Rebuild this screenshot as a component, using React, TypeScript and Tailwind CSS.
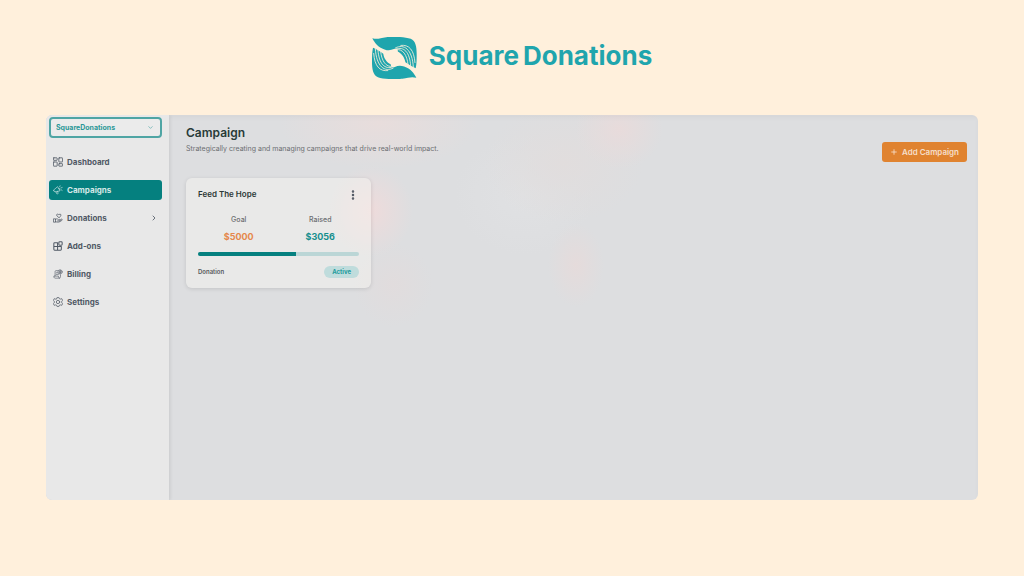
import React from "react";
import { ChevronDown, ChevronRight, EllipsisVertical, Plus } from "lucide-react";

const strokeProps = {
  viewBox: "0 0 24 24",
  fill: "none",
  stroke: "currentColor",
  strokeWidth: 1.8,
  strokeLinecap: "round" as const,
  strokeLinejoin: "round" as const,
  className: "size-[10px] shrink-0",
  "aria-hidden": true,
};

const DashboardIcon = () => (
  <svg {...strokeProps} strokeWidth={2}>
    <rect x="1" y="2" width="9" height="6" rx="1" />
    <rect x="1" y="12" width="9" height="10" rx="1" />
    <rect x="14" y="2" width="9" height="10" rx="1" />
    <rect x="14" y="16" width="9" height="6" rx="1" />
  </svg>
);

const CampaignsIcon = () => (
  <svg {...strokeProps} strokeWidth={1.5}>
    <path d="M2 14c-1-2 0-3 2-4l7-6 6 10-9 2c-3 1-5 0-6-2Z" />
    <path d="m7 16 2 5c2 1 4 0 3-2l-1-4M16 4l1-2M19 7l3-1M19 11l3 2M14 8c2-1 4 2 2 3" />
  </svg>
);

const DonationsIcon = () => (
  <svg {...strokeProps}>
    <path d="M14 11 9.500 7C7 4 10 1 14 4c4-3 7 0 4.500 3Z" />
    <path d="M2 14h4v8H2zM6 15c3-2 5-1 7 1h3c2 0 2 3 0 3h-5M17 17l3-2c2-1 3 1 1 3-5 4-9 5-15 3" />
  </svg>
);

const AddonsIcon = () => (
  <svg {...strokeProps} strokeWidth={2.5}>
    <path d="M11 4H4a2 2 0 0 0-2 2v14a2 2 0 0 0 2 2h14a2 2 0 0 0 2-2v-7M2 13h18M11 4v18" />
    <rect x="14" y="2" width="8" height="8" rx="2" />
  </svg>
);

const BillingIcon = () => (
  <svg {...strokeProps} strokeWidth={1.5}>
    <path d="M12 4H7C5 4 5 6 5 8v9H2c0 3 1 5 3 5h10c2 0 3-2 3-4v-4M5 17h8c0 3 1 5 3 5M8 9h3M8 13h5" />
    <circle cx="17" cy="7" r="5" />
    <path d="M19 5c-2-1-4 0-3 1.500l2 1c1 1.500-1 2.500-3 1.500M17 3v8" />
  </svg>
);

const SettingsIcon = () => (
  <svg {...strokeProps}>
    <path d="m9 4 1-3h4l1 3 3 1 3-1 2 4-2 2v4l2 2-2 4-3-1-3 1-1 3h-4l-1-3-3-1-3 1-2-4 2-2v-4L1 8l2-4 3 1Z" />
    <circle cx="12" cy="12" r="4" />
  </svg>
);

const LogoHand = () => (
  <>
    <path
      fill="#1fa5ad"
      d="M13 17C28 21 36 17 55 14C82 12 112 13 129 19C144 25 147 44 147 64C147 82 147 94 144 108C135 104 124 98 113 90C111 77 104 65 90 57C91 50 85 48 78 50C69 54 60 55 50 51C30 45 20 30 13 17Z"
    />
    <g fill="none" stroke="#fff0dc" strokeWidth="2.5">
      <path d="M82 47C108 33 134 50 137 106" />
      <path d="M84 50C108 42 126 58 129 102" />
      <path d="M84 52C105 48 118 68 121 98" />
      <path d="M98 39C124 36 139 52 142 92" />
    </g>
  </>
);

const Logo = () => (
  <svg viewBox="12 14 136 126" className="h-[42px] w-[45px]" aria-hidden="true">
    <LogoHand />
    <g transform="rotate(180 79.500 77)">
      <LogoHand />
    </g>
  </svg>
);

const navItems = [
  { name: "Dashboard", icon: DashboardIcon },
  { name: "Campaigns", icon: CampaignsIcon, active: true },
  { name: "Donations", icon: DonationsIcon, expandable: true },
  { name: "Add-ons", icon: AddonsIcon },
  { name: "Billing", icon: BillingIcon },
  { name: "Settings", icon: SettingsIcon },
];

const campaigns = [
  { id: 1, name: "Feed The Hope", goal: 5000, raised: 3056, type: "Donation", status: "Active" },
];

const Sidebar = () => (
  <aside className="w-[123px] shrink-0 bg-[#e8e8e8] px-[3px] pt-[2px] shadow-[1px_0_4px_rgba(0,0,0,0.08)]">
    <div className="relative">
      <select
        aria-label="Organization"
        className="block h-[21px] w-[113px] appearance-none rounded-[4px] border-2 border-[#4fa5a4] bg-[#ebebeb] px-[5px] pt-px text-[7px] font-bold text-[#2b9897]"
      >
        <option>SquareDonations</option>
      </select>
      <ChevronDown className="pointer-events-none absolute top-[7px] right-[12px] size-[7px] text-[#43a09f]" />
    </div>

    <nav className="mt-[14px] flex w-[113px] flex-col gap-2">
      {navItems.map((item) => (
        <a
          key={item.name}
          href="#"
          aria-current={item.active ? "page" : undefined}
          className={
            item.active
              ? "flex h-[20px] items-center gap-1 rounded-[3px] bg-[#05807f] px-1 text-[8px] font-bold text-[#d5e9e8]"
              : "flex h-[20px] items-center gap-1 rounded-[3px] px-1 text-[8px] font-bold text-[#505965]"
          }
        >
          <item.icon />
          <span>{item.name}</span>
          {item.expandable && <ChevronRight className="ml-auto size-2" strokeWidth={2.5} />}
        </a>
      ))}
    </nav>
  </aside>
);

const App = () => {
  return (
    <div className="min-h-screen bg-[#fff0dc] px-[46px] pb-[76px] font-['Inter',sans-serif]">
      <header className="flex h-[115px] items-center justify-center gap-[12px]">
        <Logo />
        <h1 className="flex gap-1 pb-1 text-[26px] leading-[30px] font-bold text-[#1fa5ad]">
          <span>Square</span>
          <span>Donations</span>
        </h1>
      </header>

      <div className="flex min-h-[385px] overflow-hidden rounded-[6px] bg-[#dddee0]">
        <Sidebar />

        {/* Main content */}
        <main className="flex-1 bg-[radial-gradient(ellipse_42px_46px_at_202px_96px,#eedbdb,transparent),radial-gradient(ellipse_44px_40px_at_450px_14px,#e8dbdb,transparent),radial-gradient(ellipse_28px_42px_at_407px_150px,#e5dbdb,transparent),radial-gradient(ellipse_100px_46px_at_210px_8px,#e8dddc,transparent),radial-gradient(ellipse_40px_42px_at_224px_170px,#e1dcdd,transparent),radial-gradient(ellipse_80px_60px_at_395px_48px,#e1dddd,transparent),radial-gradient(ellipse_70px_60px_at_355px_80px,#e0e1e3,transparent)] pr-[11px] pl-[17px] pt-[9px] shadow-[inset_0_3px_4px_rgba(0,0,0,0.03)]">
          <div className="flex items-start justify-between">
            <div>
              <h2 className="text-[12px] leading-[17px] font-semibold text-[#283b38]">Campaign</h2>
              <p className="mt-[3px] text-[7px] leading-[10px] text-[#6c6e72]">
                Strategically creating and managing campaigns that drive real-world impact.
              </p>
            </div>
            <button className="mt-[18px] flex h-[20px] items-center gap-1 rounded-[3px] bg-[#e08330] px-2 text-[8px] font-semibold text-[#f6dfcb]">
              <Plus className="size-2" strokeWidth={2.5} />
              Add Campaign
            </button>
          </div>

          {/* Campaign cards */}
          <div className="mt-4 grid grid-cols-[repeat(auto-fill,185px)] gap-4">
            {campaigns.map((campaign) => (
              <article
                key={campaign.id}
                className="rounded-[6px] bg-[#f8f6f2]/45 px-3 pt-[10px] pb-[10px] shadow-[0_1px_4px_rgba(0,0,0,0.12)]"
              >
                <div className="flex items-start justify-between">
                  <h3 className="text-[8px] leading-[12px] font-semibold text-[#2c3836]">{campaign.name}</h3>
                  <button aria-label="Campaign options" className="pt-px text-[#4e5560]">
                    <EllipsisVertical className="size-3" strokeWidth={3} />
                  </button>
                </div>
                <div className="mt-[13px] grid grid-cols-2 gap-1 pl-[2px] text-center">
                  <div>
                    <p className="text-[7px] leading-[12px] font-medium text-[#6b6d70]">Goal</p>
                    <p className="mt-1 text-[9px] leading-[14px] font-bold text-[#e5874b]">${campaign.goal}</p>
                  </div>
                  <div>
                    <p className="text-[7px] leading-[12px] font-medium text-[#6b6d70]">Raised</p>
                    <p className="mt-1 text-[9px] leading-[14px] font-bold text-[#168f8e]">${campaign.raised}</p>
                  </div>
                </div>
                <div className="mt-2 h-1 overflow-hidden rounded-full bg-[#bbd6d6]">
                  <div
                    className="h-full bg-[#05807f]"
                    style={{ width: `${Math.floor((campaign.raised / campaign.goal) * 100)}%` }}
                  />
                </div>
                <div className="mt-[10px] flex items-center justify-between">
                  <span className="text-[6px] leading-[12px] font-semibold text-[#55585b]">{campaign.type}</span>
                  <span className="rounded-full bg-[#bfdcdc] px-2 text-[6px] leading-[12px] font-bold text-[#219b9c]">
                    {campaign.status}
                  </span>
                </div>
              </article>
            ))}
          </div>
        </main>
      </div>
    </div>
  );
};

export default App;
